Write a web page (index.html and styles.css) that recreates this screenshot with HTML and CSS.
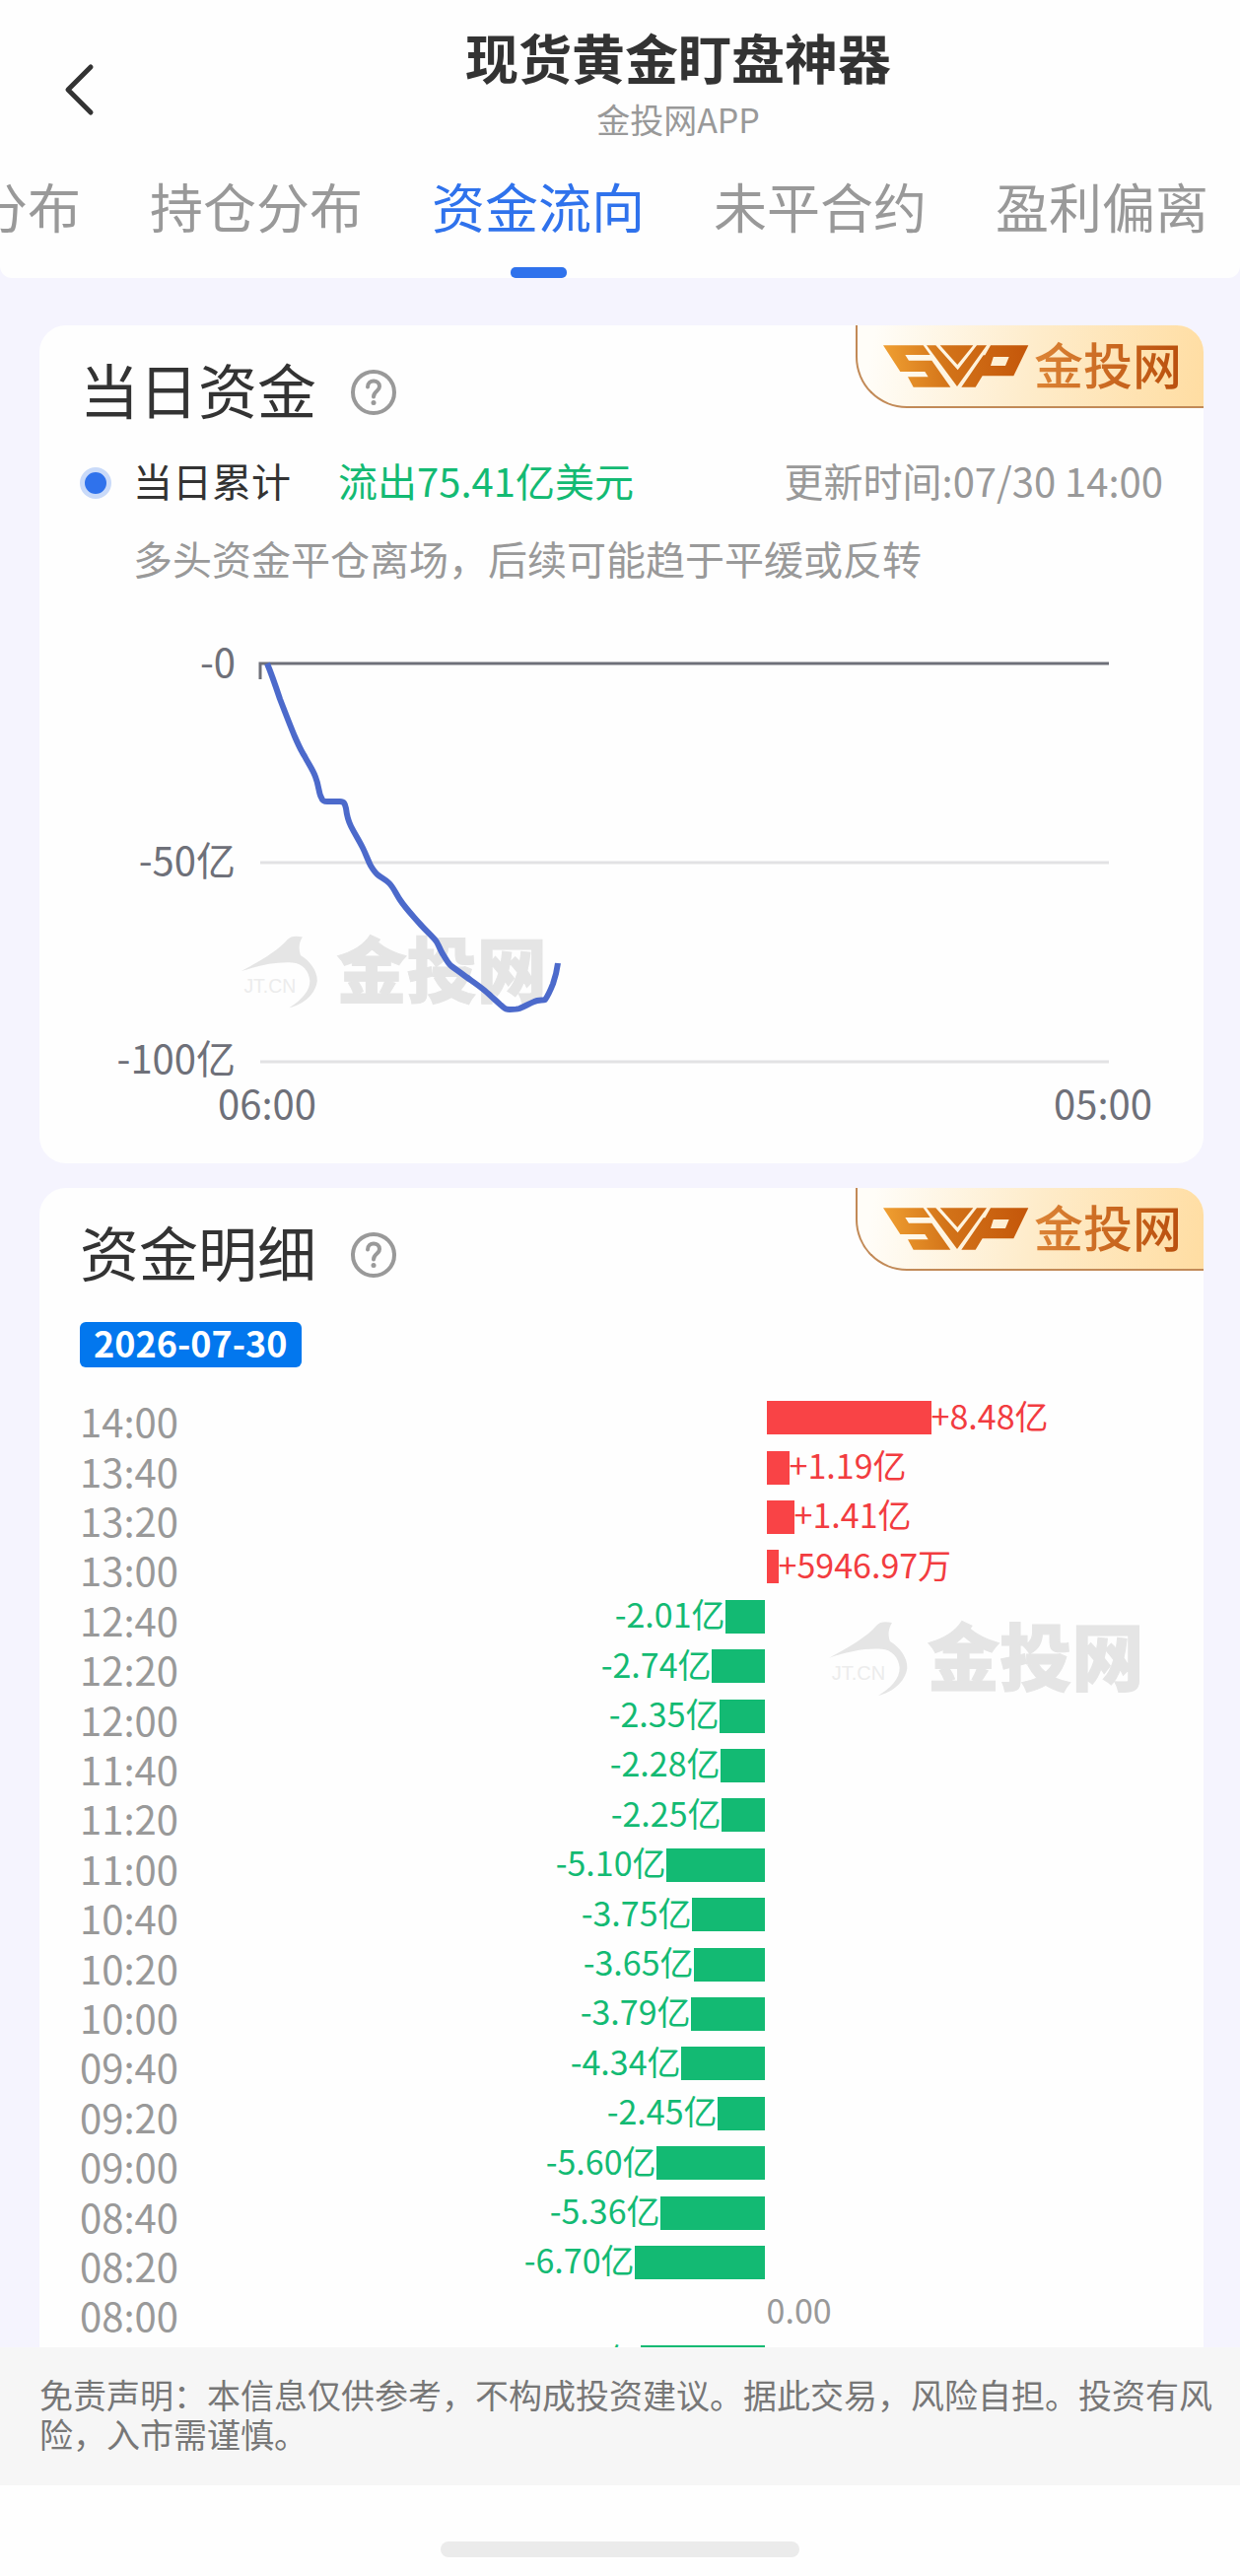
FILE: index.html
```
<!doctype html>
<html lang="zh-CN">

<head>
    <meta charset="UTF-8" />
    <meta name="viewport" content="width=device-width, initial-scale=1.0" />
    <title>现货黄金盯盘神器</title>
    <link rel="stylesheet" href="styles.css">
</head>

<body>

    <svg class="defs" aria-hidden="true">
        <defs>
            <linearGradient id="gold" gradientUnits="userSpaceOnUse" x1="33" y1="100" x2="477" y2="60">
                <stop offset="0" stop-color="#f0a032" />
                <stop offset="0.45" stop-color="#d27218" />
                <stop offset="1" stop-color="#c4560a" />
            </linearGradient>
            <symbol id="svp" viewBox="33 44 444 133">
                <g fill="url(#gold)">
                    <path d="M33 47H155L176 76H100L111 93H181L238 174H125L108 143H170L160 127H85Z" />
                    <path d="M165 47H193L260 122L318 47H348L258 172Z" />
                    <path d="M206 47H307L259 106Z" />
                    <path d="M360 47H475L430 140H335L314 174H271L338 77H370L360 109H405L416 82H340Z" />
                </g>
            </symbol>
            <symbol id="watermark" viewBox="0 0 1020 300">
                <path fill="#e5e5e5" d="M30 155C90 122 145 92 175 56C185 45 200 43 222 48C211 65 209 85 216 105C245 122 270 155 268 187C262 227 225 260 180 270C217 247 246 218 245 185C243 155 222 130 190 128C140 125 90 135 30 155Z" />
                <text class="wm-en" x="38" y="222">JT.CN</text>
                <text class="wm-cn" x="329" y="236">金投网</text>
            </symbol>
            <symbol id="help" viewBox="0 0 48 48">
                <g fill="none" stroke="#999" stroke-width="4" stroke-linecap="round">
                    <circle cx="24" cy="24" r="21" />
                    <path d="M18 18.500C18 10.500 30 10.500 30 18C30 23 24 22.500 24 28.500" />
                </g>
                <circle cx="24" cy="34.500" r="2.500" fill="#999" />
            </symbol>
        </defs>
    </svg>

    <header class="header">
        <div class="bar">
            <button class="back" aria-label="返回">
                <svg viewBox="0 0 32 54" fill="none" stroke="#333" stroke-width="5" stroke-linecap="round" stroke-linejoin="round">
                    <path d="M28 4L5 27L28 50" />
                </svg>
            </button>
            <div class="heading">
                <h1>现货黄金盯盘神器</h1>
                <p>金投网APP</p>
            </div>
        </div>
        <nav class="tabs">
            <a href="#">分布</a>
            <a href="#">持仓分布</a>
            <a href="#" class="active">资金流向</a>
            <a href="#">未平合约</a>
            <a href="#">盈利偏离</a>
        </nav>
    </header>

    <main class="content">
        <section class="card">
            <div class="badge"><svg class="svp"><use href="#svp" /></svg><span>金投网</span></div>
            <div class="card-title">
                <h2>当日资金</h2>
                <button class="help" aria-label="说明"><svg><use href="#help" /></svg></button>
            </div>
            <div class="summary">
                <span class="dot"></span>
                <span class="label">当日累计</span>
                <span class="outflow">流出75.41亿美元</span>
                <span class="time">更新时间:07/30 14:00</span>
            </div>
            <p class="tip">多头资金平仓离场，后续可能趋于平缓或反转</p>
            <svg class="line-chart" viewBox="0 0 1181 540">
                <use href="#watermark" x="195" y="295" width="330" height="97" />
                <path d="M224 235H1085M224 437H1085" stroke="#e2e2e4" stroke-width="3" />
                <path d="M1085 33H224V49" fill="none" stroke="#6e7079" stroke-width="3" />
                <path class="trend" d="M231 33C236 45 240 57 244 69C249 82 254 95 259 107C262 114 265 121 269 127C273 135 277 140 280 148C284 158 283 164 286 169C287 172 288 173 292 173H305C309 173 310 175 311 180C312 188 313 192 316 198C320 206 324 212 328 220C331 226 333 232 336 238C339 243 341 246 344 248C348 251 351 252 355 256C359 260 362 267 366 273C372 282 379 289 385 296C391 303 397 308 402 314C405 318 407 325 410 329C413 334 415 338 418 340C422 343 425 345 429 348C437 354 445 359 452 365C459 371 465 377 471 382C473 384 475 384 477 384C481 384 484 384 487 383C492 381 497 378 502 376C506 374 511 375 513 374C516 370 519 363 521 358C523 352 525 345 526 337" />
                <g class="axis" text-anchor="end">
                    <text x="199" y="47">-0</text>
                    <text x="199" y="248">-50亿</text>
                    <text x="199" y="449">-100亿</text>
                </g>
                <g class="axis" text-anchor="middle">
                    <text x="231" y="495">06:00</text>
                    <text x="1079" y="495">05:00</text>
                </g>
            </svg>
        </section>

        <section class="card">
            <div class="badge"><svg class="svp"><use href="#svp" /></svg><span>金投网</span></div>
            <div class="card-title">
                <h2>资金明细</h2>
                <button class="help" aria-label="说明"><svg><use href="#help" /></svg></button>
            </div>
            <span class="date">2026-07-30</span>
            <div class="detail">
                <svg class="detail-mark"><use href="#watermark" /></svg>
                <div class="rows" id="rows"></div>
            </div>
        </section>
    </main>

    <footer class="disclaimer">免责声明：本信息仅供参考，不构成投资建议。据此交易，风险自担。投资有风险，入市需谨慎。</footer>
    <div class="home"><span></span></div>

    <script>
        // 时间, 金额(亿), 显示文字
        const flows = [
            ["14:00", 8.48, "+8.48亿"],
            ["13:40", 1.19, "+1.19亿"],
            ["13:20", 1.41, "+1.41亿"],
            ["13:00", 0.59, "+5946.97万"],
            ["12:40", -2.01, "-2.01亿"],
            ["12:20", -2.74, "-2.74亿"],
            ["12:00", -2.35, "-2.35亿"],
            ["11:40", -2.28, "-2.28亿"],
            ["11:20", -2.25, "-2.25亿"],
            ["11:00", -5.10, "-5.10亿"],
            ["10:40", -3.75, "-3.75亿"],
            ["10:20", -3.65, "-3.65亿"],
            ["10:00", -3.79, "-3.79亿"],
            ["09:40", -4.34, "-4.34亿"],
            ["09:20", -2.45, "-2.45亿"],
            ["09:00", -5.60, "-5.60亿"],
            ["08:40", -5.36, "-5.36亿"],
            ["08:20", -6.70, "-6.70亿"],
            ["08:00", 0, "0.00"],
            ["", -6.42, "亿"]
        ];

        document.getElementById("rows").innerHTML = flows.map(function ([time, value, text]) {
            const width = Math.round(Math.abs(value) * 19.7);
            const type = value > 0 ? "up" : value < 0 ? "down" : "zero";
            return `<div class="row ${type}">
                <span class="row-time">${time}</span>
                <div class="flow"><i style="width: ${width}px"></i><b>${text}</b></div>
            </div>`;
        }).join("");
    </script>
</body>

</html>
```
FILE: styles.css
```
* {
    box-sizing: border-box;
}

body {
    margin: 0;
    height: 100vh;
    display: flex;
    flex-direction: column;
    background: #f5f4fe;
    color: #333;
    font-family: "Noto Sans CJK SC", sans-serif;
}

h1,
h2,
p {
    margin: 0;
    font-weight: 400;
}

button {
    padding: 0;
    border: none;
    background: none;
    cursor: pointer;
}

.defs {
    position: absolute;
    width: 0;
    height: 0;
}

.header {
    background: #fefefe;
    border-radius: 0 0 12px 12px;
    overflow: hidden;
}

.bar {
    display: flex;
    padding-top: 22px;
}

.back {
    width: 118px;
    padding: 12px 0 0 64px;
}

.back svg {
    display: block;
    width: 32px;
    height: 54px;
}

.heading {
    flex: 1;
    text-align: center;
}

.heading h1 {
    font-size: 54px;
    line-height: 72px;
    font-weight: 700;
}

.heading p {
    color: #999;
    font-size: 34px;
    line-height: 54px;
}

.tabs {
    display: flex;
    justify-content: flex-end;
    gap: 70px;
    padding-right: 32px;
}

.tabs a {
    flex: none;
    padding-top: 21px;
    color: #999;
    font-size: 54px;
    line-height: 80px;
    text-decoration: none;
}

.tabs a::after {
    content: "";
    display: block;
    width: 57px;
    height: 11px;
    margin: 22px auto 0;
    border-radius: 5px;
}

.tabs .active {
    color: #2f72ec;
}

.tabs .active::after {
    background: #2f72ec;
}

.content {
    flex: 1;
    min-height: 0;
    overflow-y: auto;
    scrollbar-width: none;
    padding: 48px 37px 0 40px;
}

.card {
    position: relative;
    margin-bottom: 25px;
    padding: 0 41px;
    background: #fefefe;
    border-radius: 27px;
}

.badge {
    position: absolute;
    top: 0;
    right: 0;
    display: flex;
    align-items: flex-start;
    gap: 5px;
    height: 84px;
    padding: 0 22px 0 26px;
    border: solid #c28a57;
    border-width: 0 0 2px 2px;
    border-radius: 0 27px 0 52px;
    background: linear-gradient(100deg, #fffdf8 5%, #feeccb 50%, #ffdda2);
    font-size: 50px;
    font-weight: 500;
}

.badge span {
    line-height: 76px;
    background: linear-gradient(90deg, #dc8436, #b94f0d);
    background-clip: text;
    color: transparent;
}

.svp {
    width: 148px;
    height: 45px;
    margin-top: 19px;
}

.card-title {
    display: flex;
    align-items: center;
    gap: 34px;
    height: 136px;
}

.card-title h2 {
    padding-bottom: 8px;
    font-size: 60px;
    line-height: 120px;
}

.help svg {
    display: block;
    width: 48px;
    height: 48px;
}

.summary {
    display: flex;
    align-items: flex-start;
    height: 48px;
    font-size: 40px;
    line-height: 42px;
}

.dot {
    width: 32px;
    height: 32px;
    margin: 8px 22px 0 0;
    border: 5px solid #c9daf9;
    border-radius: 50%;
    background: #2f72ec;
}

.label {
    margin-right: 48px;
}

.outflow {
    color: #13ba73;
}

.time {
    margin-left: auto;
    color: #999;
}

.tip {
    margin: 28px 0 50px 54px;
    color: #999;
    font-size: 40px;
    line-height: 48px;
}

.line-chart {
    display: block;
    width: calc(100% + 82px);
    margin: 0 -41px;
}

.trend {
    fill: none;
    stroke: #4c6acb;
    stroke-width: 6;
    stroke-linejoin: round;
}

.axis {
    fill: #6e7079;
    font-size: 40px;
}

.wm-cn {
    fill: #e5e5e5;
    stroke: #e5e5e5;
    stroke-width: 3px;
    font-size: 220px;
    font-weight: 900;
}

.wm-en {
    fill: #ececec;
    font-family: "Liberation Sans", sans-serif;
    font-size: 60px;
}

.date {
    display: block;
    width: fit-content;
    padding: 0 14px 5px;
    border-radius: 6px;
    background: #0277ee;
    color: #fff;
    font-size: 36px;
    font-weight: 700;
    line-height: 41px;
}

.detail {
    position: relative;
    padding-top: 26px;
}

.detail-mark {
    position: absolute;
    top: 243px;
    right: 9px;
    width: 340px;
    height: 100px;
}

.rows {
    position: relative;
    display: grid;
    grid-auto-rows: 1fr;
    height: 1008px;
}

/* 中轴线在第二、三列之间 */
.row {
    display: grid;
    grid-template-columns: 120px 572fr 402fr;
    column-gap: 2px;
    align-items: center;
    min-height: 0;
}

.row-time {
    padding-top: 6px;
    color: #999;
    font-size: 40px;
    line-height: 44px;
}

.flow {
    grid-column: 3;
    display: flex;
    align-items: center;
    min-width: 0;
    white-space: nowrap;
}

.flow i {
    height: 34px;
}

.flow b {
    padding-bottom: 5px;
    font-size: 34px;
    font-weight: 400;
    line-height: 40px;
}

.down .flow {
    grid-column: 2;
    flex-direction: row-reverse;
}

.up i {
    background: #f94346;
}

.up b {
    color: #f23c40;
}

.down i {
    background: #13ba73;
}

.down b {
    color: #13ba73;
}

.zero b {
    color: #999;
}

.disclaimer {
    height: 140px;
    padding: 28px 24px 0 40px;
    background: #f6f6f6;
    color: #777;
    font-size: 34px;
    line-height: 40px;
}

.home {
    display: flex;
    justify-content: center;
    height: 92px;
    padding-top: 57px;
    background: #fefefe;
}

.home span {
    width: 364px;
    height: 16px;
    border-radius: 8px;
    background: #ebebeb;
}
```
